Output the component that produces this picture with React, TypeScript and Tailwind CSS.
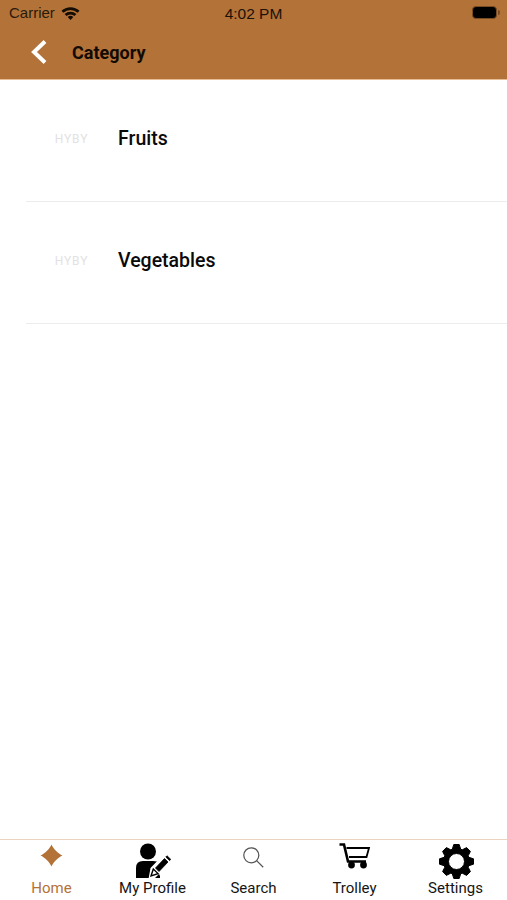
import React from "react";

const roboto = { fontFamily: "Roboto, sans-serif" };

function gearPath() {
  const cx = 18.5;
  const cy = 18.5;
  const outer = 17.2;
  const root = 13;
  const teeth = 8;
  const pts: string[] = [];
  for (let i = 0; i < teeth; i++) {
    const a = (i * 2 * Math.PI) / teeth - Math.PI / 2;
    const step = (2 * Math.PI) / teeth;
    const offsets: [number, number][] = [
      [-0.42, root],
      [-0.2, outer],
      [0.2, outer],
      [0.42, root],
    ];
    for (const [o, r] of offsets) {
      const t = a + o * step;
      pts.push(`${(cx + r * Math.cos(t)).toFixed(2)} ${(cy + r * Math.sin(t)).toFixed(2)}`);
    }
  }
  return `M${pts.join(" L")} Z M${cx} ${cy - 8} A8 8 0 1 0 ${cx} ${cy + 8} A8 8 0 1 0 ${cx} ${cy - 8} Z`;
}

function Row({ label }: { label: string }) {
  return (
    <div className="h-[122px] ml-[26px] border-b border-[#ececec] flex items-center">
      <div className="w-[92px] flex justify-center pr-[1px] -mt-[4px]">
        <span className="text-[12px] font-normal tracking-[0.9px] text-[#e2e2e2] leading-none [font-family:Roboto,sans-serif]">HYBY</span>
      </div>
      <span className="text-[19.5px] font-medium text-[#0a0a0a] leading-none -mt-[3px] [font-family:Roboto,sans-serif]">{label}</span>
    </div>
  );
}

function Tab({ label, color, icon }: { label: string; color: string; icon: React.ReactNode }) {
  return (
    <div className="flex-1 flex flex-col items-center">
      <div className="h-[38px] w-full flex items-start justify-center">{icon}</div>
      <span className={`text-[15px] leading-[18px] mt-[1px] ${color} [font-family:Roboto,sans-serif]`}>{label}</span>
    </div>
  );
}

export default function App() {
  return (
    <div className="w-[507px] h-[900px] bg-white flex flex-col overflow-hidden" style={roboto}>
      <header className="h-[80px] bg-[#b27238] border-b border-[#e6bd94] flex flex-col shrink-0">
        <div className="h-[27px] flex items-center relative px-[9px]">
          <span className="text-[15px] text-[#2a1a0a] [font-family:'Liberation_Sans',sans-serif]">Carrier</span>
          <svg className="ml-[6px] -mt-[2px]" width="19" height="14" viewBox="0 0 19 14">
            <path d="M0.5 4.8 A13 13 0 0 1 18.5 4.8 L16.6 6.8 A10.3 10.3 0 0 0 2.4 6.8 Z" fill="#150c04" />
            <path d="M3.6 8 A8.8 8.8 0 0 1 15.4 8 L13.5 10 A6 6 0 0 0 5.5 10 Z" fill="#150c04" />
            <path d="M6.7 11.1 A4 4 0 0 1 12.3 11.1 L9.5 14 Z" fill="#150c04" />
          </svg>
          <div className="absolute left-0 right-0 top-[4px] text-center text-[15.5px] leading-[20px] text-[#1c1108] [font-family:'Liberation_Sans',sans-serif]">4:02 PM</div>
          <div className="absolute left-[472px] top-[6px] w-[25px] h-[13px] rounded-[4px] border border-[#7a4d24] bg-black" />
          <div className="absolute left-[498px] top-[10px] w-[2px] h-[5px] rounded-r-sm bg-[#7a4d24]" />
        </div>
        <div className="h-[52px] flex items-center">
          <svg className="ml-[30px] -mt-[2px]" width="18" height="26" viewBox="0 0 18 26" fill="none">
            <path d="M15 2.5 L4 13 L15 23.5" stroke="white" strokeWidth="4" />
          </svg>
          <span className="ml-[24px] text-[18px] font-bold text-[#120a03] leading-none">Category</span>
        </div>
      </header>

      <main className="flex-1">
        <Row label="Fruits" />
        <Row label="Vegetables" />
      </main>

      <nav className="h-[61px] border-t border-[#ecd3bf] flex shrink-0 px-[1px]">
        <Tab
          label="Home"
          color="text-[#b27238]"
          icon={
            <svg className="mt-[4px]" width="23" height="23" viewBox="0 0 24 24">
              <path d="M12 0.5 C13.5 4.5 19 10 23.5 12 C19 14 13.5 19.5 12 23.5 C10.5 19.5 5 14 0.5 12 C5 10 10.5 4.5 12 0.5 Z" fill="#b27238" />
            </svg>
          }
        />
        <Tab
          label="My Profile"
          color="text-[#151515]"
          icon={
            <svg className="mt-[3px]" width="36" height="36" viewBox="0 0 36 36">
              <circle cx="13" cy="8.5" r="8" fill="#000" />
              <path d="M1 35 V25 Q1 18 8 18 H18 Q22 18 25 20 V35 Z" fill="#000" />
              <path d="M13.5 36 L15.5 25 L29 11 L38 20 L25 33 L24 31 L19 36 Z" fill="#fff" />
              <path d="M20.5 25 L29.5 15.5 L33 19 L24 28.5 Z M30.8 14 L32 12.8 L35.8 16.4 L34.6 17.6 Z" fill="#000" stroke="#000" strokeWidth="0.8" />
              <path d="M16 33 L18.3 26 L23 30.6 Z" fill="#fff" stroke="#000" strokeWidth="1.4" />
            </svg>
          }
        />
        <Tab
          label="Search"
          color="text-[#151515]"
          icon={
            <svg className="mt-[6px]" width="23" height="23" viewBox="0 0 26 26" fill="none" stroke="#555" strokeWidth="1.4">
              <circle cx="10.5" cy="10.5" r="8.5" />
              <path d="M16.5 16.5 L24 24" />
            </svg>
          }
        />
        <Tab
          label="Trolley"
          color="text-[#151515]"
          icon={
            <svg className="mt-[3px]" width="32" height="26" viewBox="0 0 32 26" fill="none">
              <path d="M0.5 1.5 H5 L9 18.5 H27" stroke="#000" strokeWidth="2.6" />
              <path d="M7.5 5 H30 L27.5 14 H10" stroke="#000" strokeWidth="1.8" />
              <circle cx="12.5" cy="22" r="3.4" fill="#000" />
              <circle cx="24.5" cy="22" r="3.4" fill="#000" />
            </svg>
          }
        />
        <Tab
          label="Settings"
          color="text-[#151515]"
          icon={
            <svg className="mt-[3px] ml-[1px]" width="37" height="37" viewBox="0 0 37 37">
              <path fillRule="evenodd" fill="#000" stroke="#000" strokeWidth="1" strokeLinejoin="round" d={gearPath()} />
            </svg>
          }
        />
      </nav>
    </div>
  );
}
